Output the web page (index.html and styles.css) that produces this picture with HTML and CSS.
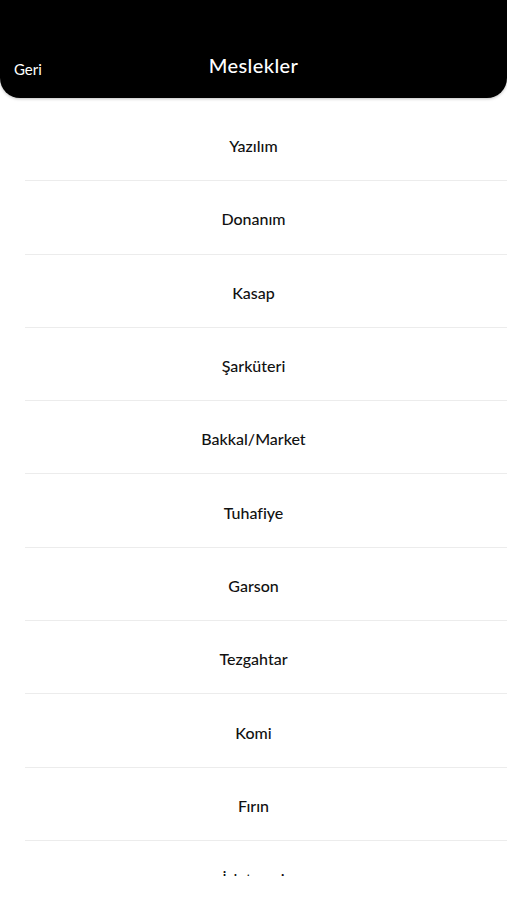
FILE: index.html
```html
<!DOCTYPE html>
<html lang="tr">
<head>
<meta charset="utf-8">
<title>Meslekler</title>
<link rel="stylesheet" href="styles.css">
</head>
<body>
<header class="topbar">
  <span class="back">Geri</span>
  <h1 class="title">Meslekler</h1>
  <span class="spacer"></span>
</header>
<main class="list">
  <div class="row">Yazılım</div>
  <div class="row">Donanım</div>
  <div class="row">Kasap</div>
  <div class="row">Şarküteri</div>
  <div class="row">Bakkal/Market</div>
  <div class="row">Tuhafiye</div>
  <div class="row">Garson</div>
  <div class="row">Tezgahtar</div>
  <div class="row">Komi</div>
  <div class="row">Fırın</div>
  <div class="row">İşletmeci</div>
</main>
</body>
</html>
```
FILE: styles.css
```css
html, body {
  margin: 0;
  padding: 0;
  background: #ffffff;
}
body {
  font-family: "Lato", "Noto Sans", sans-serif;
  color: #111111;
  width: 507px;
  height: 900px;
  overflow: hidden;
}
.topbar {
  height: 98px;
  box-sizing: border-box;
  background: #000000;
  border-radius: 0 0 20px 20px;
  box-shadow: 0 1px 3px rgba(0,0,0,0.25);
  display: grid;
  grid-template-columns: 1fr auto 1fr;
  align-items: end;
  padding: 0 14px 20px 14px;
  color: #ffffff;
}
.back {
  font-size: 15px;
  line-height: 18px;
  margin-bottom: 0;
  justify-self: start;
}
.title {
  margin: 0;
  font-size: 20px;
  font-weight: 500;
  line-height: 24px;
  margin-bottom: 1px;
  letter-spacing: 0.4px;
}
.list {
  margin-top: 10px;
  height: 768px;
  overflow: hidden;
}
.row {
  height: 73.3px;
  box-sizing: border-box;
  display: flex;
  align-items: center;
  justify-content: center;
  font-size: 16px;
  font-weight: 500;
  padding-top: 2px;
  background: linear-gradient(#ececec, #ececec) no-repeat 25px 100% / calc(100% - 25px) 1px;
}
```
